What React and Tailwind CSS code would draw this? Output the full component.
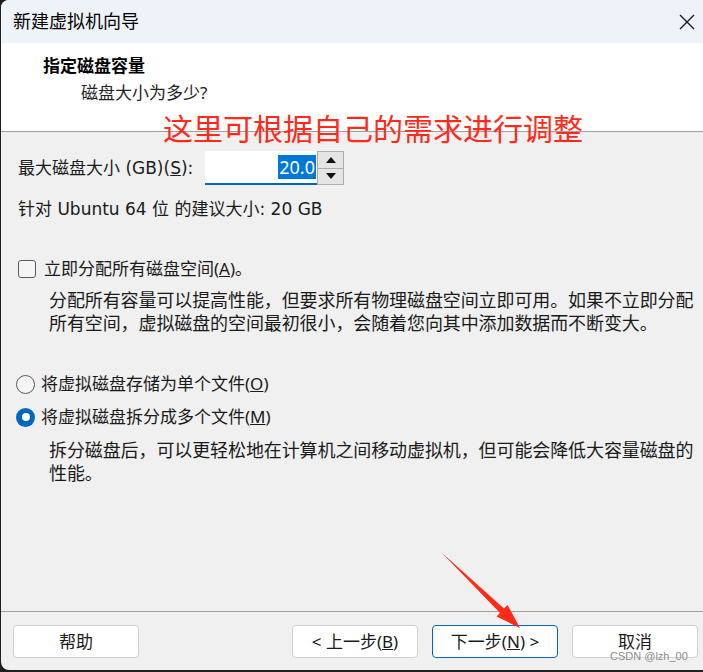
import React from "react";

const FONT = "font-['Noto_Sans','Noto_Sans_CJK_SC',sans-serif]";
// 西文部分在原图里偏宽，单独换字体
const LATIN = "font-['DejaVu_Sans','Noto_Sans_CJK_SC',sans-serif] text-[17px]";

function Btn({ children, primary }) {
  return (
    <button
      className={
        "h-[33px] w-[126px] rounded-[4px] bg-white text-[17px] text-[#1a1a1a] flex items-center justify-center " +
        (primary ? "border border-[#0067c0]" : "border border-[#d0d0d0]")
      }
    >
      {children}
    </button>
  );
}

function Radio({ checked }) {
  return checked ? (
    <span className="w-[19px] h-[19px] rounded-full bg-[#0067c0] flex items-center justify-center shrink-0">
      <span className="w-[8px] h-[8px] rounded-full bg-white" />
    </span>
  ) : (
    <span className="w-[19px] h-[19px] rounded-full border border-[#5a5a5a] bg-[#f5f5f5] shrink-0" />
  );
}

export default function App() {
  return (
    <div className={"w-[703px] h-[672px] bg-[#1f1f1f] pl-[1px] overflow-hidden relative " + FONT}>
      <div className="w-[712px] h-[670px] rounded-[8px] overflow-hidden bg-[#f0f0f0] flex flex-col">
        {/* 标题栏 */}
        <div className="h-[43px] shrink-0 bg-[#eef2f9] flex items-center justify-between pl-[12px] pr-[18px]">
          <span className="text-[18px] text-black">新建虚拟机向导</span>
          <svg width="16" height="16" viewBox="0 0 16 16">
            <path d="M1 1 L15 15 M15 1 L1 15" stroke="#1a1a1a" strokeWidth="1.4" />
          </svg>
        </div>

        {/* 页眉 */}
        <div className="h-[89px] shrink-0 bg-white border-b border-[#a0a0a0] pt-[11px]">
          <div className="pl-[42px] text-[17px] leading-[24px] font-bold text-black">指定磁盘容量</div>
          <div className="pl-[80px] mt-[3px] text-[17px] leading-[24px] text-[#222]">磁盘大小为多少?</div>
        </div>

        {/* 内容 */}
        <div className="flex-1 px-[17px] text-[17px] text-[#1a1a1a]">
          <div className="flex items-center mt-[19px] h-[34px]">
            <span className="w-[187px] shrink-0 whitespace-nowrap">
              最大磁盘大小<span className={LATIN}> (GB)(<span className="underline">S</span>):</span>
            </span>
            <div className="w-[112px] h-[34px] bg-white border-b-2 border-[#0067c0] flex items-center justify-end pr-[1px]">
              <span className="bg-[#0078d7] text-white text-[18px] leading-[24px] px-[1px]">20.0</span>
            </div>
            <div className="w-[27px] h-[34px] border border-[#adadad] bg-[#e5e5e5] flex flex-col">
              <div className="flex-1 border-b border-[#adadad] flex items-center justify-center">
                <svg width="10" height="6" viewBox="0 0 10 6"><path d="M5 0 L10 6 L0 6 Z" fill="#111" /></svg>
              </div>
              <div className="flex-1 flex items-center justify-center">
                <svg width="10" height="6" viewBox="0 0 10 6"><path d="M0 0 L10 0 L5 6 Z" fill="#111" /></svg>
              </div>
            </div>
          </div>

          <div className="mt-[12px] leading-[24px] whitespace-nowrap">
            针对<span className={LATIN}> Ubuntu 64 </span>位<span className={LATIN}> </span>的建议大小
            <span className={LATIN}>: 20 GB</span>
          </div>

          <div className="mt-[36px] flex items-center h-[24px]">
            <span className="w-[18px] h-[18px] rounded-[3px] border border-[#5a5a5a] bg-[#f5f5f5] shrink-0" />
            <span className="ml-[8px]">
              立即分配所有磁盘空间(<span className="underline">A</span>)。
            </span>
          </div>

          <p className="mt-[8px] pl-[31px] text-[18px] leading-[23px] whitespace-nowrap tracking-[-0.1px]">
            分配所有容量可以提高性能，但要求所有物理磁盘空间立即可用。如果不立即分配
            <br />
            所有空间，虚拟磁盘的空间最初很小，会随着您向其中添加数据而不断变大。
          </p>

          <div className="mt-[37px] flex items-center h-[24px] -ml-[2px]">
            <Radio />
            <span className="ml-[6px]">
              将虚拟磁盘存储为单个文件(<span className="underline">O</span>)
            </span>
          </div>

          <div className="mt-[9px] flex items-center h-[24px] -ml-[2px]">
            <Radio checked />
            <span className="ml-[6px]">
              将虚拟磁盘拆分成多个文件(<span className="underline">M</span>)
            </span>
          </div>

          <p className="mt-[10px] pl-[31px] text-[18px] leading-[23px] whitespace-nowrap tracking-[-0.1px]">
            拆分磁盘后，可以更轻松地在计算机之间移动虚拟机，但可能会降低大容量磁盘的
            <br />
            性能。
          </p>
        </div>

        {/* 底部按钮 */}
        <div className="h-[59px] shrink-0 border-t border-[#a0a0a0] flex items-start pt-[13px] pl-[12px] w-[703px]">
          <Btn>帮助</Btn>
          <div className="flex-1" />
          <Btn>
            &lt; 上一步(<span className="underline">B</span>)
          </Btn>
          <div className="w-[14px]" />
          <Btn primary>
            下一步(<span className="underline">N</span>) &gt;
          </Btn>
          <div className="w-[14px]" />
          <Btn>取消</Btn>
          <div className="w-[6px]" />
        </div>
      </div>

      {/* 标注 */}
      <div className="absolute left-[163px] top-[111px] text-[30px] leading-[36px] text-[#ff2a1a] whitespace-nowrap">
        这里可根据自己的需求进行调整
      </div>
      <svg className="absolute left-0 top-0 pointer-events-none" width="703" height="672">
        <polygon
          points="441,552 504,608.5 507.5,604.9 520,628 496.5,616.5 500,612.9"
          fill="#ff2a1a"
        />
      </svg>
      <div className="absolute left-[610px] top-[650px] text-[11px] leading-[13px] text-[#8a8a8a] font-['Liberation_Sans',sans-serif] [text-shadow:0_0_2px_#fff]">
        CSDN @lzh_00
      </div>
    </div>
  );
}
